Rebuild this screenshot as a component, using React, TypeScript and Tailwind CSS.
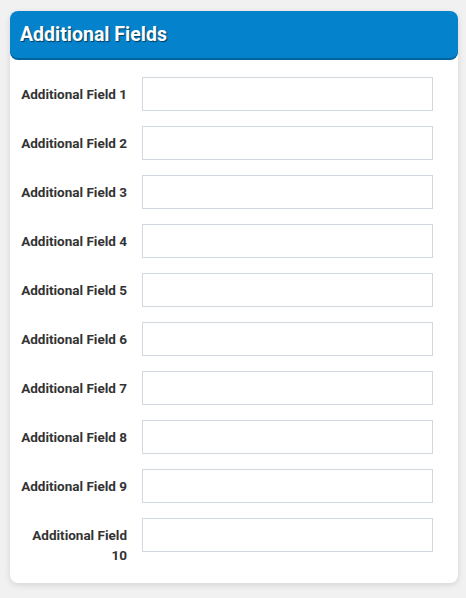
import React from "react";

export default function App() {
  const fields = Array.from({ length: 10 }, (_, i) => `Additional Field ${i + 1}`);
  return (
    <div
      className="w-[466px] h-[598px] bg-[#f1f1f1] pt-[11px] pl-[10px] pr-[8px]"
      style={{ fontFamily: "Roboto, 'Noto Sans', sans-serif" }}
    >
      <div className="w-[448px] h-[572px] bg-white rounded-[8px] shadow-[0_2px_6px_rgba(0,0,0,0.12)]">
        <div className="h-[47px] bg-[#0582cc] rounded-[8px] shadow-[0_2px_0_#03639c] flex items-center pl-[10px]">
          <span className="text-white text-[19.5px] font-bold [text-shadow:1px_1px_1px_rgba(0,0,0,0.55)] mt-[1px]">
            Additional Fields
          </span>
        </div>
        <div className="flex flex-col gap-[15px] pt-[19px]">
          {fields.map((f) => (
            <div key={f} className="flex items-start">
              <label className="w-[117px] shrink-0 text-right text-[13.5px] font-bold text-[#333333] leading-[20px] pt-[7px] pl-[9px]">
                {f}
              </label>
              <input
                type="text"
                className="ml-[15px] w-[291px] h-[34px] border border-[#d2d8e0] bg-white outline-none"
              />
            </div>
          ))}
        </div>
      </div>
    </div>
  );
}
